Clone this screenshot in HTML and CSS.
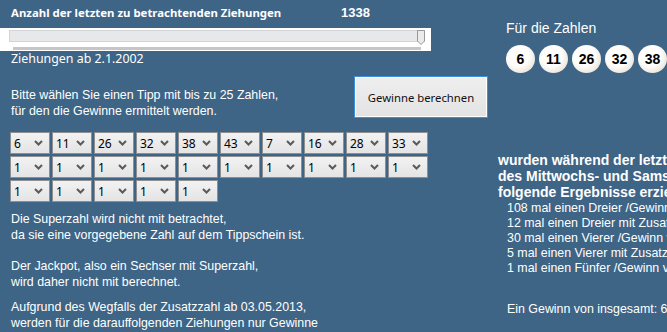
FILE: index.html
```html
<!DOCTYPE html>
<html>
<head>
  <meta charset="utf-8">
  <title>Lotto Gewinnrechner</title>
  <link rel="stylesheet" href="styles.css">
</head>
<body>
  <div class="page">
    <div class="left-column">
      <div class="header-row">
        <span class="header-label">Anzahl der letzten zu betrachtenden Ziehungen</span>
        <span class="header-value">1338</span>
      </div>
      <div class="slider-box">
        <div class="slider-track">
          <svg class="slider-thumb" width="8" height="15" viewBox="0 0 8 15">
            <path d="M0.5 0.5 H7.5 V11 L4 14.5 L0.5 11 Z" fill="#ebebeb" stroke="#999"/>
          </svg>
        </div>
        <div class="slider-ticks"></div>
      </div>
      <div class="since">Ziehungen ab 2.1.2002</div>

      <div class="intro-row">
        <p class="intro">Bitte wählen Sie einen Tipp mit bis zu 25 Zahlen,<br>für den die Gewinne ermittelt werden.</p>
        <button class="calc-button">Gewinne berechnen</button>
      </div>

      <div class="select-grid" id="grid"></div>

      <div class="notes">
        <p>Die Superzahl wird nicht mit betrachtet,<br>da sie eine vorgegebene Zahl auf dem Tippschein ist.</p>
        <p>Der Jackpot, also ein Sechser mit Superzahl,<br>wird daher nicht mit berechnet.</p>
        <p class="last-note">Aufgrund des Wegfalls der Zusatzzahl ab 03.05.2013,<br>werden für die darauffolgenden Ziehungen nur Gewinne</p>
      </div>
    </div>

    <div class="right-column">
      <div class="numbers-title">Für die Zahlen</div>
      <div class="balls">
        <span class="ball">6</span>
        <span class="ball">11</span>
        <span class="ball">26</span>
        <span class="ball">32</span>
        <span class="ball">38</span>
        <span class="ball">43</span>
      </div>
      <div class="result-title">wurden während der letzten 1338 Ziehungen<br>des Mittwochs- und Samstagslottos<br>folgende Ergebnisse erzielt:</div>
      <ul class="results">
        <li>108 mal einen Dreier /Gewinn von je 10,00 €</li>
        <li>12 mal einen Dreier mit Zusatzzahl /Gewinn von je 10,00 €</li>
        <li>30 mal einen Vierer /Gewinn von je 40,00 €</li>
        <li>5 mal einen Vierer mit Zusatzzahl /Gewinn von je 40,00 €</li>
        <li>1 mal einen Fünfer /Gewinn von je 3.000,00 €</li>
      </ul>
      <div class="total">Ein Gewinn von insgesamt: 6.000,00 €</div>
    </div>
  </div>

  <script>
    // Build the three rows of dropdowns
    const values = [6, 11, 26, 32, 38, 43, 7, 16, 28, 33];
    const grid = document.getElementById("grid");

    function makeSelect(value) {
      const box = document.createElement("div");
      box.className = "select";
      box.innerHTML = '<span class="select-value">' + value + '</span>' +
        '<svg class="chevron" width="9" height="6" viewBox="0 0 9 6">' +
        '<path d="M1 1 L4.5 4.5 L8 1" fill="none" stroke="#5a5a5a" stroke-width="2"/></svg>';
      return box;
    }

    const rows = [values, new Array(10).fill(1), new Array(5).fill(1)];
    rows.forEach(function (row) {
      const line = document.createElement("div");
      line.className = "select-row";
      row.forEach(function (v) { line.appendChild(makeSelect(v)); });
      grid.appendChild(line);
    });
  </script>
</body>
</html>
```

FILE: styles.css
```css
/* Lotto calculator page */
body {
  margin: 0;
  background-color: #3e6486;
  color: #fff;
  font-family: 'Liberation Sans', Arial, sans-serif;
  font-size: 12.4px;
  overflow: hidden;
}

p {
  margin: 0;
}

.page {
  display: flex;
  width: 667px;
  height: 332px;
  overflow: hidden;
}

.left-column {
  width: 498px;
  flex-shrink: 0;
}

/* header with the count */
.header-row {
  display: flex;
  padding: 4px 0 0 11px;
  height: 20px;
  font-family: 'Noto Sans', sans-serif;
  font-weight: bold;
  font-size: 11.4px;
  line-height: 17px;
}

.header-label {
  width: 330px;
}

.header-value {
  font-family: 'Liberation Sans', Arial, sans-serif;
  font-size: 13px;
}

/* slider */
.slider-box {
  margin-top: 4px;
  width: 431px;
  height: 23px;
  background-color: #fff;
  padding: 2px 0 0 9px;
  box-sizing: border-box;
}

.slider-track {
  position: relative;
  width: 416px;
  height: 12px;
  background-color: #e7e8e9;
  border: 1px solid #d4d4d4;
  box-sizing: border-box;
}

.slider-thumb {
  position: absolute;
  right: -1px;
  top: -1px;
}

.slider-ticks {
  margin: 5px 0 0 4px;
  width: 408px;
  height: 3px;
  background-color: #c6c6c6;
}

.since {
  padding-left: 11px;
  font-family: 'Noto Sans', sans-serif;
  font-size: 12.4px;
  line-height: 16px;
  margin-top: 0;
}

/* intro and button */
.intro-row {
  display: flex;
  align-items: flex-start;
  margin-top: 9px;
  height: 48px;
}

.intro {
  width: 343px;
  padding: 11px 0 0 11px;
  line-height: 16px;
}

.calc-button {
  width: 134px;
  height: 42px;
  background: linear-gradient(#efefef, #e3e3e3);
  border: 1px solid #3c8fd9;
  box-shadow: inset 0 0 0 1px #fff;
  font-family: 'Noto Sans', sans-serif;
  font-size: 11.3px;
  color: #111;
  padding: 0;
}

/* dropdown grid */
.select-grid {
  padding: 8px 0 0 10px;
  display: flex;
  flex-direction: column;
  gap: 2px;
}

.select-row {
  display: flex;
  gap: 2px;
}

.select {
  display: flex;
  align-items: center;
  justify-content: space-between;
  width: 40px;
  height: 22px;
  box-sizing: border-box;
  padding: 0 6px 0 3px;
  background: linear-gradient(#f2f2f2, #e4e4e4);
  border: 1px solid #8f8f8f;
  color: #000;
  font-family: 'Noto Sans', sans-serif;
  font-size: 12px;
}

.chevron {
  display: block;
}

/* explanation texts */
.notes {
  padding: 9px 0 0 11px;
  line-height: 16px;
}

.notes p {
  margin-bottom: 15px;
}

.notes p + p {
  margin-bottom: 9px;
}

/* right side */
.right-column {
  white-space: nowrap;
  padding-top: 20px;
}

.numbers-title {
  padding-left: 8px;
  font-size: 14px;
  line-height: 17px;
}

.balls {
  display: flex;
  gap: 4px;
  margin: 8px 0 0 8px;
}

.ball {
  width: 29px;
  height: 28px;
  border-radius: 50%;
  flex-shrink: 0;
  display: flex;
  align-items: center;
  justify-content: center;
  background: radial-gradient(circle at 42% 38%, #ffffff 0%, #fefdfb 45%, #ece6dc 75%, #c2b9aa 100%);
  color: #000;
  font-weight: bold;
  font-size: 14px;
}

.result-title {
  margin-top: 79px;
  font-weight: bold;
  font-size: 14px;
  line-height: 16px;
}

.results {
  list-style: none;
  margin: 1px 0 0 0;
  padding-left: 9px;
  font-size: 12.4px;
  line-height: 15px;
}

.total {
  margin-top: 26px;
  padding-left: 9px;
}
```
